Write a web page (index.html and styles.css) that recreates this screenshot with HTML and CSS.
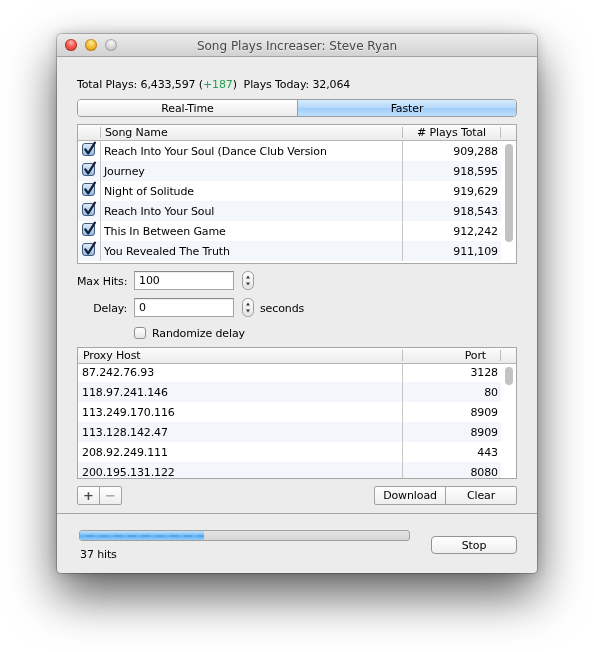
FILE: index.html
```html
<!DOCTYPE html>
<html>
<head>
<meta charset="utf-8">
<link rel="stylesheet" href="styles.css">
</head>
<body>
<svg class="defs" width="0" height="0">
  <defs>
    <linearGradient id="cbg" x1="0" y1="0" x2="0" y2="1">
      <stop offset="0" stop-color="#e2effc"/>
      <stop offset="0.5" stop-color="#b5d2ef"/>
      <stop offset="1" stop-color="#8fb8e2"/>
    </linearGradient>
    <linearGradient id="stg" x1="0" y1="0" x2="0" y2="1">
      <stop offset="0" stop-color="#ffffff"/>
      <stop offset="1" stop-color="#e4e4e4"/>
    </linearGradient>
  </defs>
</svg>
<div class="window">
  <div class="titlebar">
    <div class="lights"><span class="light red"></span><span class="light yellow"></span><span class="light gray"></span></div>
    <div class="title">Song Plays Increaser: Steve Ryan</div>
    <div></div>
  </div>
  <div class="content">
    <div class="stats">Total Plays: 6,433,597 (<span class="plus">+187</span>)&nbsp; Plays Today: 32,064</div>
    <div class="segmented">
      <div class="seg left">Real-Time</div>
      <div class="seg right">Faster</div>
    </div>

    <div class="table songs">
      <div class="thead">
        <div class="th c-check"></div><span class="sep"></span>
        <div class="th c-name">Song Name</div><span class="sep"></span>
        <div class="th c-num"># Plays Total</div><span class="sep"></span>
        <div class="th c-rest"></div>
      </div>
      <div class="tbody">
        <div class="rows">
          <div class="row"><div class="td c-check"><svg class="cb" width="16" height="20" viewBox="0 0 16 20"><rect x="1.5" y="2.5" width="12" height="12" rx="2.5" fill="url(#cbg)" stroke="#435a7c"/><path d="M4.3 8.3 L7.2 12.4 L13.9 1.6" fill="none" stroke="#141d33" stroke-width="2.2" stroke-linecap="round" stroke-linejoin="round"/></svg></div><div class="td c-name">Reach Into Your Soul (Dance Club Version</div><div class="td c-num">909,288</div></div>
          <div class="row"><div class="td c-check"><svg class="cb" width="16" height="20" viewBox="0 0 16 20"><rect x="1.5" y="2.5" width="12" height="12" rx="2.5" fill="url(#cbg)" stroke="#435a7c"/><path d="M4.3 8.3 L7.2 12.4 L13.9 1.6" fill="none" stroke="#141d33" stroke-width="2.2" stroke-linecap="round" stroke-linejoin="round"/></svg></div><div class="td c-name">Journey</div><div class="td c-num">918,595</div></div>
          <div class="row"><div class="td c-check"><svg class="cb" width="16" height="20" viewBox="0 0 16 20"><rect x="1.5" y="2.5" width="12" height="12" rx="2.5" fill="url(#cbg)" stroke="#435a7c"/><path d="M4.3 8.3 L7.2 12.4 L13.9 1.6" fill="none" stroke="#141d33" stroke-width="2.2" stroke-linecap="round" stroke-linejoin="round"/></svg></div><div class="td c-name">Night of Solitude</div><div class="td c-num">919,629</div></div>
          <div class="row"><div class="td c-check"><svg class="cb" width="16" height="20" viewBox="0 0 16 20"><rect x="1.5" y="2.5" width="12" height="12" rx="2.5" fill="url(#cbg)" stroke="#435a7c"/><path d="M4.3 8.3 L7.2 12.4 L13.9 1.6" fill="none" stroke="#141d33" stroke-width="2.2" stroke-linecap="round" stroke-linejoin="round"/></svg></div><div class="td c-name">Reach Into Your Soul</div><div class="td c-num">918,543</div></div>
          <div class="row"><div class="td c-check"><svg class="cb" width="16" height="20" viewBox="0 0 16 20"><rect x="1.5" y="2.5" width="12" height="12" rx="2.5" fill="url(#cbg)" stroke="#435a7c"/><path d="M4.3 8.3 L7.2 12.4 L13.9 1.6" fill="none" stroke="#141d33" stroke-width="2.2" stroke-linecap="round" stroke-linejoin="round"/></svg></div><div class="td c-name">This In Between Game</div><div class="td c-num">912,242</div></div>
          <div class="row"><div class="td c-check"><svg class="cb" width="16" height="20" viewBox="0 0 16 20"><rect x="1.5" y="2.5" width="12" height="12" rx="2.5" fill="url(#cbg)" stroke="#435a7c"/><path d="M4.3 8.3 L7.2 12.4 L13.9 1.6" fill="none" stroke="#141d33" stroke-width="2.2" stroke-linecap="round" stroke-linejoin="round"/></svg></div><div class="td c-name">You Revealed The Truth</div><div class="td c-num">911,109</div></div>
        </div>
        <div class="scroller"><div class="thumb big"></div></div>
      </div>
    </div>

    <div class="form-row first">
      <div class="label">Max Hits:</div>
      <div class="field">100</div>
      <svg class="stepper" width="12" height="19" viewBox="0 0 12 19"><rect x="0.5" y="0.5" width="11" height="18" rx="5" fill="url(#stg)" stroke="#9a9a9a"/><path d="M4 7.6 L8 7.6 L6 4.4 Z" fill="#3c3c3c"/><path d="M4 11.4 L8 11.4 L6 14.6 Z" fill="#3c3c3c"/></svg>
    </div>
    <div class="form-row">
      <div class="label">Delay:</div>
      <div class="field">0</div>
      <svg class="stepper" width="12" height="19" viewBox="0 0 12 19"><rect x="0.5" y="0.5" width="11" height="18" rx="5" fill="url(#stg)" stroke="#9a9a9a"/><path d="M4 7.6 L8 7.6 L6 4.4 Z" fill="#3c3c3c"/><path d="M4 11.4 L8 11.4 L6 14.6 Z" fill="#3c3c3c"/></svg>
      <div class="unit">seconds</div>
    </div>
    <div class="check-row">
      <span class="box"></span>
      <span class="check-label">Randomize delay</span>
    </div>

    <div class="table proxy">
      <div class="thead">
        <div class="th c-host">Proxy Host</div><span class="sep"></span>
        <div class="th c-num">Port</div><span class="sep"></span>
        <div class="th c-rest"></div>
      </div>
      <div class="tbody">
        <div class="rows">
          <div class="row"><div class="td c-host">87.242.76.93</div><div class="td c-num">3128</div></div>
          <div class="row"><div class="td c-host">118.97.241.146</div><div class="td c-num">80</div></div>
          <div class="row"><div class="td c-host">113.249.170.116</div><div class="td c-num">8909</div></div>
          <div class="row"><div class="td c-host">113.128.142.47</div><div class="td c-num">8909</div></div>
          <div class="row"><div class="td c-host">208.92.249.111</div><div class="td c-num">443</div></div>
          <div class="row"><div class="td c-host">200.195.131.122</div><div class="td c-num">8080</div></div>
        </div>
        <div class="scroller"><div class="thumb small"></div></div>
      </div>
    </div>

    <div class="actions">
      <div class="btngroup pm">
        <div class="b plus-b">+</div>
        <div class="b minus-b">−</div>
      </div>
      <div class="btngroup dl">
        <div class="b">Download</div>
        <div class="b">Clear</div>
      </div>
    </div>
  </div>
  <div class="divider"></div>
  <div class="bottom">
    <div class="progress-wrap">
      <div class="progress"><div class="fill" style="width:124px"></div></div>
      <div class="hits">37 hits</div>
    </div>
    <div class="stop">Stop</div>
  </div>
</div>
</body>
</html>
```

FILE: styles.css
```css
* { box-sizing: border-box; }
html, body { margin: 0; padding: 0; background: #ffffff; }
body {
  font-family: "DejaVu Sans", "Noto Sans", sans-serif;
  font-size: 11px;
  letter-spacing: -0.12px;
  color: #000;
  padding-top: 34px;
  min-height: 652px;
}
.defs { display: block; width: 0; height: 0; }

.window {
  width: 480px;
  height: 539px;
  margin: 0 0 0 57px;
  background: #ececec;
  border-radius: 5px 5px 4px 4px;
  box-shadow: 0 0 0 1px rgba(0,0,0,0.22);
  filter: drop-shadow(0 0 6px rgba(0,0,0,0.18)) drop-shadow(0 22px 24px rgba(0,0,0,0.62));
  display: flex;
  flex-direction: column;
}

.titlebar {
  height: 23px;
  display: grid;
  grid-template-columns: 1fr auto 1fr;
  align-items: center;
  background: linear-gradient(#ebebeb, #d2d2d2);
  border-bottom: 1px solid #a3a3a3;
  border-radius: 5px 5px 0 0;
}
.lights { display: flex; gap: 8px; padding-left: 8px; }
.light {
  width: 12px; height: 12px; border-radius: 50%;
}
.light.red {
  background: radial-gradient(circle at 50% 30%, #ffb3ad 0%, #f4564b 45%, #c9342a 100%);
  box-shadow: inset 0 0 0 1px rgba(140,30,20,0.55);
}
.light.yellow {
  background: radial-gradient(circle at 50% 30%, #ffeaa0 0%, #f4bb35 45%, #d28f12 100%);
  box-shadow: inset 0 0 0 1px rgba(150,100,10,0.55);
}
.light.gray {
  background: radial-gradient(circle at 50% 30%, #f6f6f6 0%, #d6d6d6 50%, #b9b9b9 100%);
  box-shadow: inset 0 0 0 1px rgba(110,110,110,0.45);
}
.title {
  font-size: 12px;
  letter-spacing: 0;
  color: #474747;
  text-shadow: 0 1px 0 rgba(255,255,255,0.5);
  white-space: nowrap;
  line-height: 14px;
  padding-top: 1px;
}

.content { padding: 0 20px; }

.stats { margin-top: 20px; height: 14px; line-height: 14px; padding-top: 1px; white-space: nowrap; }
.plus { color: #22a04b; }

.segmented {
  margin-top: 8px;
  height: 18px;
  display: flex;
  border: 1px solid #9c9c9c;
  border-radius: 4px;
  overflow: hidden;
}
.seg { display: flex; align-items: center; justify-content: center; line-height: 16px; padding-top: 1px; }
.seg.left { width: 220px; border-right: 1px solid #9c9c9c; background: linear-gradient(#ffffff, #ececec); }
.seg.right { flex: 1; background: linear-gradient(#d6ebfd 0%, #b4d9fb 50%, #a2cef8 52%, #bcdefc 100%); }

.table { margin-top: 7px; border: 1px solid #a7a7a7; background: #fff; }
.thead {
  display: flex;
  align-items: center;
  height: 16px;
  border-bottom: 1px solid #b5b5b5;
  background: linear-gradient(#fcfcfc, #ebebeb);
}
.th { line-height: 15px; white-space: nowrap; overflow: hidden; }
.sep { flex: none; width: 1px; height: 11px; background: #bcbcbc; }
.th.c-rest { flex: 1; }
.th.c-num { width: 97px; text-align: right; padding-right: 14px; }

.songs .th.c-check { width: 22px; }
.songs .th.c-name { width: 301px; padding-left: 4px; }

.tbody { display: flex; overflow: hidden; }
.songs .tbody { height: 122px; }
.proxy .tbody { height: 114px; }
.rows { width: 423px; flex: none; }
.proxy .rows { margin-top: -2px; }
.row { display: flex; height: 20px; }
.row:nth-child(even) { background: #f3f6fa; }
.td { height: 20px; line-height: 18px; padding-top: 2px; white-space: nowrap; overflow: hidden; }
.td.c-num { flex: 1; text-align: right; padding-right: 3px; }

.songs .td.c-check {
  width: 23px; flex: none;
  border-right: 1px solid #c6c6c6;
  display: flex; justify-content: center;
  padding-top: 0;
}
.cb { display: block; }
.songs .td.c-name { width: 302px; flex: none; padding-left: 3px; border-right: 1px solid #c6c6c6; }

.proxy .th.c-host { width: 324px; padding-left: 5px; }
.proxy .td.c-host { width: 325px; flex: none; padding-left: 4px; border-right: 1px solid #c6c6c6; }

.scroller { flex: 1; padding: 3px 0 0 4px; }
.thumb { width: 8px; border-radius: 4px; background: #c2c2c2; }
.thumb.big { height: 98px; }
.thumb.small { height: 18px; }

.form-row { display: flex; align-items: center; height: 19px; margin-top: 8px; }
.form-row.first { margin-top: 7px; }
.label { width: 50px; text-align: right; margin-right: 7px; white-space: nowrap; padding-top: 1px; }
.field {
  width: 100px; height: 19px;
  background: #fff;
  border: 1px solid #a4a4a4;
  border-top-color: #8a8a8a;
  box-shadow: inset 0 1px 1px rgba(0,0,0,0.08);
  padding-left: 4px;
  padding-top: 1px;
  line-height: 16px;
}
.stepper { display: block; margin-left: 8px; }
.unit { margin-left: 6px; padding-top: 1px; }

.check-row { display: flex; align-items: center; height: 14px; margin-top: 9px; padding-left: 57px; }
.box {
  width: 12px; height: 12px;
  border: 1px solid #8f8f8f;
  border-radius: 3px;
  background: linear-gradient(#ffffff, #e6e6e6);
}
.check-label { margin-left: 6px; }

.actions { margin-top: 7px; height: 19px; display: flex; justify-content: space-between; }
.btngroup {
  display: flex;
  border: 1px solid #a2a2a2;
  border-radius: 2px;
  background: linear-gradient(#ffffff, #eeeeee);
}
.btngroup .b { display: flex; align-items: center; justify-content: center; line-height: 17px; }
.btngroup .b + .b { border-left: 1px solid #a2a2a2; }
.pm { width: 45px; }
.pm .b { flex: 1; font-size: 13px; font-weight: bold; }
.plus-b { color: #484848; }
.minus-b { color: #a8a8a8; }
.dl { width: 143px; }
.dl .b { flex: 1; }

.divider { margin-top: 8px; height: 1px; background: #a4a4a4; flex: none; }

.bottom { flex: 1; display: flex; justify-content: space-between; align-items: flex-start; padding: 0 20px 0 22px; }
.progress-wrap { width: 331px; margin-top: 16px; }
.progress {
  height: 11px;
  border: 1px solid #a0a0a0;
  border-radius: 3px;
  background: linear-gradient(#e4e4e4, #d6d6d6);
  overflow: hidden;
}
.fill {
  height: 100%;
  background:
    repeating-linear-gradient(90deg, rgba(40,120,220,0.0) 0 6px, rgba(40,120,220,0.28) 6px 14px) 0 4px / 100% 2px no-repeat,
    linear-gradient(#bfe1fc 0%, #84c3f7 40%, #5faff2 55%, #93cdf9 100%);
}
.hits { margin-top: 6px; line-height: 14px; padding-left: 1px; padding-top: 1px; }
.stop {
  margin-top: 22px;
  width: 86px; height: 18px;
  border: 1px solid #939393;
  border-radius: 4px;
  background: linear-gradient(#ffffff, #efefef);
  text-align: center;
  line-height: 16px;
  padding-top: 1px;
}
```
